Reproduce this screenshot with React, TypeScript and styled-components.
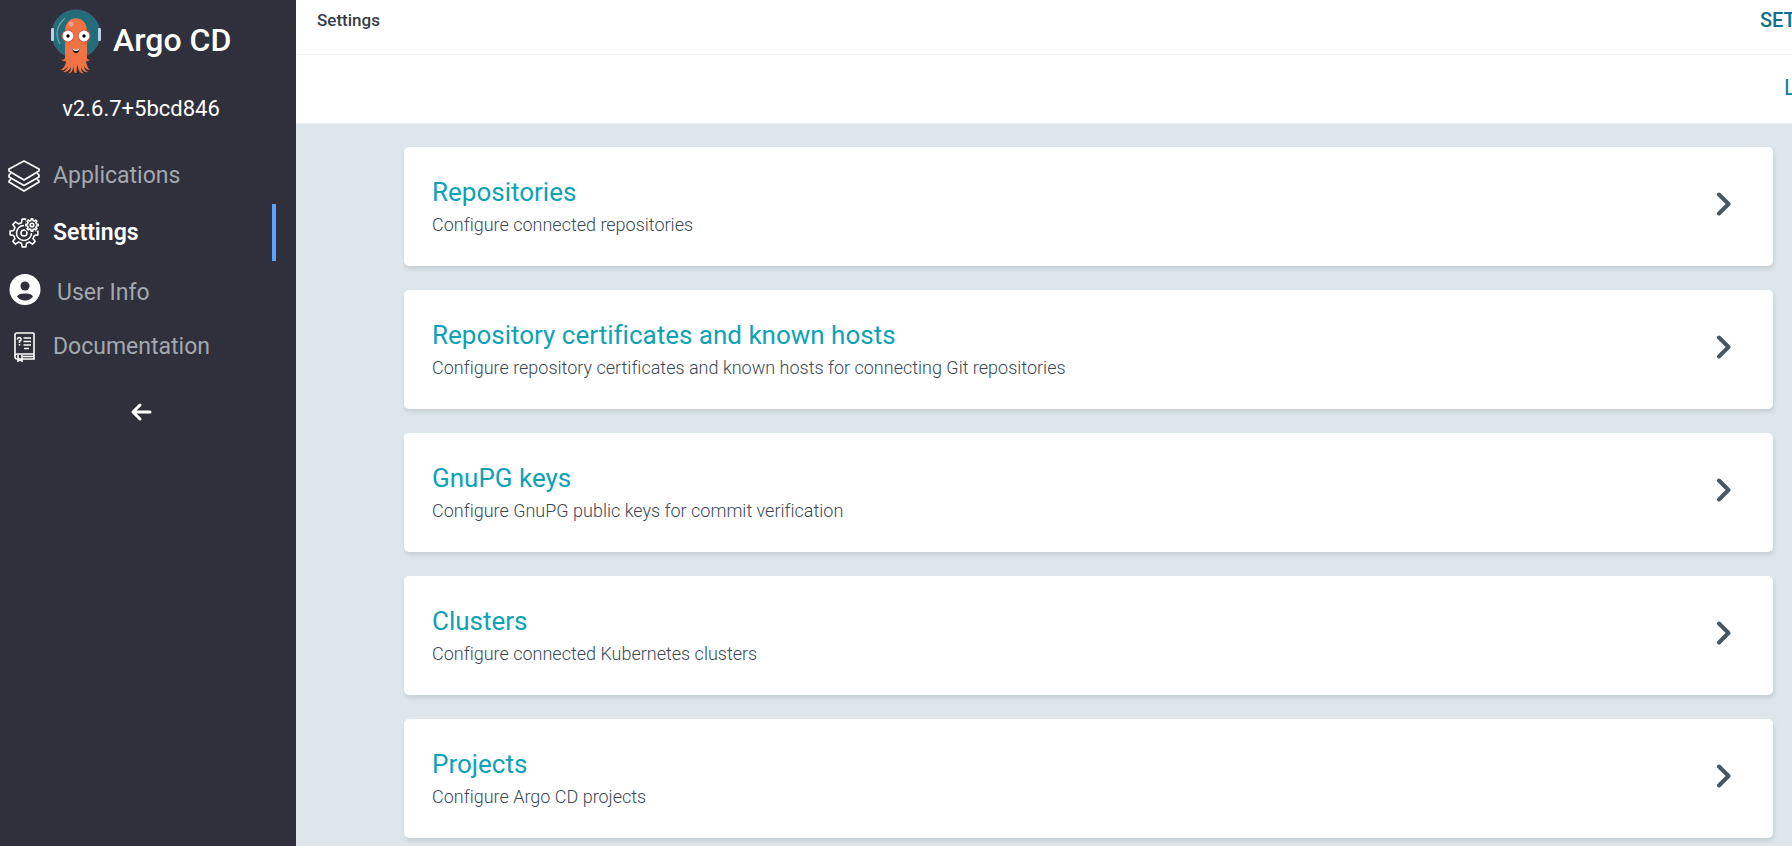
import React from "react";
import styled, { createGlobalStyle } from "styled-components";

const GlobalStyle = createGlobalStyle`
  * { box-sizing: border-box; }
  body {
    margin: 0;
    background: #dee6eb;
    font-family: Roboto, "Liberation Sans", sans-serif;
    font-variant-ligatures: none;
    overflow: hidden;
  }
  h1, h2, p, ul { margin: 0; padding: 0; }
`;

const Layout = styled.div`
  display: grid;
  grid-template-columns: 296px minmax(0, 1fr);
  min-height: 100vh;
`;

const Sidebar = styled.aside`
  background: #30303d;
  color: #fff;
`;

const Brand = styled.div`
  display: flex;
  align-items: flex-start;
  gap: 11px;
  padding: 8px 0 0 50px;
  font-size: 32px;
  line-height: 64px;
  font-weight: 500;
`;

const Version = styled.p`
  padding-right: 14px;
  margin-top: 17px;
  text-align: center;
  font-size: 22px;
  line-height: 32px;
`;

const NavList = styled.ul`
  list-style: none;
  margin-top: 22px;
`;

const NavLink = styled.a<{ $active?: boolean; $lowered?: boolean }>`
  display: flex;
  align-items: center;
  gap: ${(p) => (p.$lowered ? 16 : 13)}px;
  height: 57px;
  margin-right: 20px;
  padding-left: ${(p) => (p.$lowered ? 9 : 8)}px;
  border-right: 4px solid ${(p) => (p.$active ? "#5aa5fb" : "transparent")};
  color: ${(p) => (p.$active ? "#fff" : "#a3a8ae")};
  font-size: 23px;
  font-weight: ${(p) => (p.$active ? 600 : 400)};
  text-decoration: none;

  svg { color: #fff; flex: none; }
  span { padding-top: ${(p) => (p.$lowered ? 6 : 0)}px; }
`;

const Collapse = styled.button`
  display: block;
  margin: 28px 0 0 130px;
  padding: 0;
  border: 0;
  background: none;
  color: #fff;
  line-height: 0;
`;

const Main = styled.main`
  overflow: hidden;
`;

const TopBar = styled.header<{ $height: number }>`
  display: flex;
  justify-content: space-between;
  align-items: flex-start;
  height: ${(p) => p.$height}px;
  padding: 8px 0 0 21px;
  background: #fff;
  border-bottom: 1px solid #eceeef;
`;

const Crumb = styled.a`
  color: #363c4a;
  font-size: 17px;
  line-height: 24px;
  font-weight: 500;
  text-decoration: none;
`;

const PageTitle = styled.h1`
  width: 32px;
  overflow: hidden;
  color: #0f6f8c;
  font-size: 20px;
  line-height: 24px;
  font-weight: 500;
`;

const ActionBar = styled(TopBar)`
  justify-content: flex-end;
  padding-top: 20px;
`;

const LogLink = styled.a`
  width: 8px;
  overflow: hidden;
  color: #0f7f9c;
  font-size: 22px;
  line-height: 26px;
  font-weight: 400;
  text-decoration: none;
`;

const CardList = styled.div`
  display: flex;
  flex-direction: column;
  gap: 24px;
  padding: 23px 19px 8px 108px;
`;

const Card = styled.a`
  display: flex;
  align-items: center;
  justify-content: space-between;
  height: 119px;
  padding: 0 42px 5px 28px;
  border-radius: 5px;
  background: #fff;
  box-shadow: 1px 3px 4px #c5ced2;
  text-decoration: none;
`;

const CardBody = styled.div`
  padding-top: 6px;
`;

const CardTitle = styled.h2`
  color: #0da2b6;
  font-size: 26px;
  line-height: 36px;
  font-weight: 400;
`;

const CardText = styled.p`
  color: #3a4854;
  font-size: 18px;
  line-height: 30px;
  font-weight: 350;
`;

const Logo = () => (
  <svg width="52" height="68" viewBox="0 0 52 68" aria-hidden="true">
    <circle cx="26" cy="26" r="24" fill="#216d79" stroke="#456285" strokeWidth="1" />
    <rect x="1" y="20" width="3" height="13" rx="1" fill="#b9d1e8" />
    <rect x="48" y="20" width="3" height="13" rx="1" fill="#b9d1e8" />
    <path d="M15 10Q2 22 10 36" fill="none" stroke="#6b9da3" strokeWidth="1.4" />
    <path
      d="M15 23C15 6 37 6 37 23V50Q38 53 40 51Q39 54 36 53Q37 60 40 62Q36 62 34 58Q34 62 38 64Q33 65 31 59Q31 64 34 65.500Q29 66 28 59L27 57L26.500 65Q23 66 24 58Q22 66 18 65.500Q21 63 21 59Q18 65 13 64Q17 62 18 58Q15 63 11 62Q16 58 16 53Q13 54 11 51Q14 53 15 50Z"
      fill="#ef7344"
    />
    <circle cx="21" cy="16" r="2.5" fill="#f8a184" />
    <circle cx="18" cy="28" r="6.4" fill="#e7502f" />
    <circle cx="34" cy="28" r="6.4" fill="#e7502f" />
    <circle cx="18" cy="28" r="5.4" fill="#fff" />
    <circle cx="34" cy="28" r="5.4" fill="#fff" />
    <circle cx="18" cy="28" r="1.7" fill="#000" />
    <circle cx="34" cy="28" r="1.7" fill="#000" />
    <path d="M22 40Q26 43 30 40Q29 45 26 45Q23 45 22 40Z" fill="#111" />
    <path d="M22 40Q26 43 30 40L29 42Q26 44 23 42Z" fill="#fff" />
  </svg>
);

const LayersIcon = () => (
  <svg width="32" height="32" viewBox="0 0 32 32" fill="none" stroke="currentColor" strokeWidth="1.7" strokeLinejoin="round">
    <path d="M16 1L31 9V11L16 20L1 11V9Z" />
    <path d="M3 13L1 15V17L16 25.500L31 17V15L29 13" />
    <path d="M3 19L1 21V22L16 31L31 22V21L29 19" />
  </svg>
);

const gearPath = (cx: number, cy: number, inner: number, outer: number, teeth: number) => {
  const step = (Math.PI * 2) / teeth;
  const point = (r: number, a: number) =>
    `${(cx + r * Math.cos(a)).toFixed(2)} ${(cy + r * Math.sin(a)).toFixed(2)}`;
  return (
    Array.from({ length: teeth }, (_, i) => {
      const a = i * step - Math.PI / 2;
      return `${i ? "L" : "M"}${point(inner, a - step * 0.3)}L${point(outer, a - step * 0.17)}L${point(outer, a + step * 0.17)}L${point(inner, a + step * 0.3)}`;
    }).join("") + "Z"
  );
};

const GearsIcon = () => (
  <svg width="32" height="32" viewBox="0 0 32 32" fill="none" stroke="currentColor" strokeWidth="1.6" strokeLinejoin="round">
    <path d={gearPath(16, 16, 10.6, 14, 8)} />
    <circle cx="16" cy="16" r="7.500" />
    <circle cx="16" cy="16" r="3" />
    <path d={gearPath(24, 8, 5, 6.6, 8)} fill="#30303d" stroke="#30303d" strokeWidth="3" />
    <path d={gearPath(24, 8, 4.6, 6.2, 8)} fill="#30303d" />
    <circle cx="24" cy="8" r="1.8" />
  </svg>
);

const UserIcon = () => (
  <svg width="32" height="32" viewBox="0 0 32 32">
    <circle cx="16" cy="15.500" r="15.500" fill="currentColor" />
    <circle cx="16" cy="12" r="4.500" fill="#30303d" />
    <path d="M8 22.500Q9 19.500 16 19.500Q23 19.500 24 22.500Q21 26.500 16 26.500Q11 26.500 8 22.500Z" fill="#30303d" />
  </svg>
);

const BookIcon = () => (
  <svg width="32" height="32" viewBox="0 0 32 32" fill="none" stroke="currentColor" strokeWidth="1.6">
    <path d="M9 28H26V3Q26 2 25 2H9Q7 2 7 4V26Q7 28 9 28M7 25Q7 23 9 23H26M15 25.500H26" />
    <path d="M10 24V30L12 29L14 30V24" />
    <path d="M9.500 8.500Q9.500 6.500 11.500 6.500Q13 6.500 13 8.500Q13 10 11.500 10V12M11.500 13V14.500M15.500 7H23M15.500 10.500H23M15.500 14H23M16 17.500H21" />
  </svg>
);

const BackIcon = () => (
  <svg width="22" height="18" viewBox="0 0 22 18" fill="none" stroke="currentColor" strokeWidth="3" strokeLinecap="round" strokeLinejoin="round">
    <path d="M10 2L3 9L10 16M4 9H20" />
  </svg>
);

const Chevron = () => (
  <svg width="14" height="24" viewBox="0 0 14 24" fill="none" stroke="#495763" strokeWidth="4" strokeLinecap="round" strokeLinejoin="round">
    <path d="M2 2.500L11.500 12L2 21.500" />
  </svg>
);

const navItems = [
  { label: "Applications", icon: <LayersIcon /> },
  { label: "Settings", icon: <GearsIcon />, active: true },
  { label: "User Info", icon: <UserIcon />, lowered: true },
  { label: "Documentation", icon: <BookIcon /> },
];

const cards = [
  ["Repositories", "Configure connected repositories"],
  ["Repository certificates and known hosts", "Configure repository certificates and known hosts for connecting Git repositories"],
  ["GnuPG keys", "Configure GnuPG public keys for commit verification"],
  ["Clusters", "Configure connected Kubernetes clusters"],
  ["Projects", "Configure Argo CD projects"],
];

export default function App() {
  return (
    <Layout>
      <GlobalStyle />
      <Sidebar>
        <Brand><Logo />Argo CD</Brand>
        <Version>v2.6.7+5bcd846</Version>
        <nav>
          <NavList>
            {navItems.map((item) => (
              <li key={item.label}>
                <NavLink href="#" $active={item.active} $lowered={item.lowered}>
                  {item.icon}
                  <span>{item.label}</span>
                </NavLink>
              </li>
            ))}
          </NavList>
        </nav>
        <Collapse type="button" aria-label="Collapse"><BackIcon /></Collapse>
      </Sidebar>
      <Main>
        <TopBar $height={55}>
          <Crumb href="#">Settings</Crumb>
          <PageTitle>SET</PageTitle>
        </TopBar>
        <ActionBar as="div" $height={69}>
          <LogLink href="#">L</LogLink>
        </ActionBar>
        <CardList>
          {cards.map(([title, text]) => (
            <Card href="#" key={title}>
              <CardBody>
                <CardTitle>{title}</CardTitle>
                <CardText>{text}</CardText>
              </CardBody>
              <Chevron />
            </Card>
          ))}
        </CardList>
      </Main>
    </Layout>
  );
}
